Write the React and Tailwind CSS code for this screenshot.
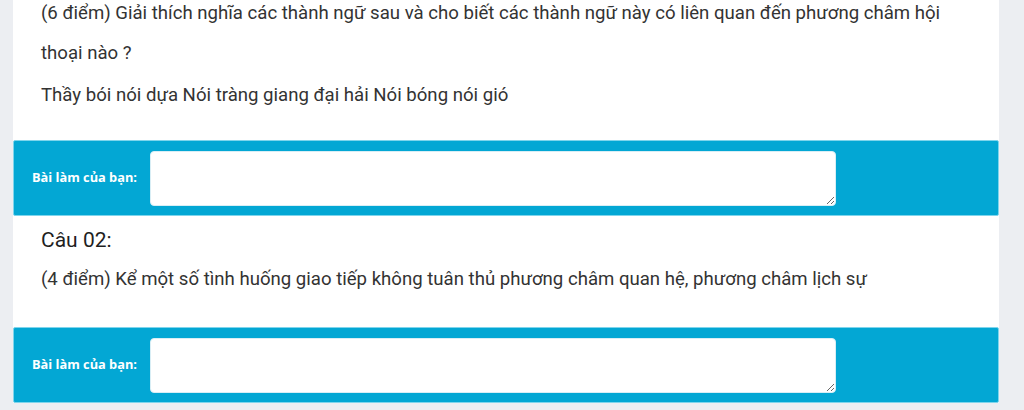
export default function App() {
  const font = { fontFamily: "Roboto, 'Noto Sans', sans-serif" };
  const Band = () => (
    <div className="flex items-center h-[76px] bg-[#03a7d4] border border-[#7fd5ec] rounded-[2px] pl-[18px]">
      <div className="w-[118px] text-white font-bold text-[12.8px]" style={{ fontFamily: "'Open Sans', Roboto, sans-serif" }}>
        Bài làm của bạn:
      </div>
      <textarea className="w-[686px] h-[55px] bg-white rounded-[4px] border border-[#d9eef5] outline-none" />
    </div>
  );
  return (
    <div className="w-[1024px] h-[410px] overflow-hidden bg-[#eceef2]" style={font}>
      <div className="ml-[13px] w-[986px] -mt-[7px] bg-white">
        <div className="pl-[28px] pr-[40px] text-[18.6px] text-[#333333]">
          <p className="leading-[40px]">
            (6 điểm) Giải thích nghĩa các thành ngữ sau và cho biết các thành ngữ này có liên quan đến phương châm hội thoại nào ?
          </p>
          <p className="leading-[40px] mt-[2px]">Thầy bói nói dựa Nói tràng giang đại hải Nói bóng nói gió</p>
        </div>
        <div className="h-[25px]" />
        <Band />
        <div className="pl-[28px] pr-[20px] pt-[10px] text-[#333333]">
          <h3 className="text-[21px] font-normal leading-[28px] text-[#1f1f1f]">Câu 02:</h3>
          <p className="text-[18.6px] leading-[40px] mt-[5px]">
            (4 điểm) Kể một số tình huống giao tiếp không tuân thủ phương châm quan hệ, phương châm lịch sự
          </p>
        </div>
        <div className="h-[28px]" />
        <Band />
      </div>
    </div>
  );
}
